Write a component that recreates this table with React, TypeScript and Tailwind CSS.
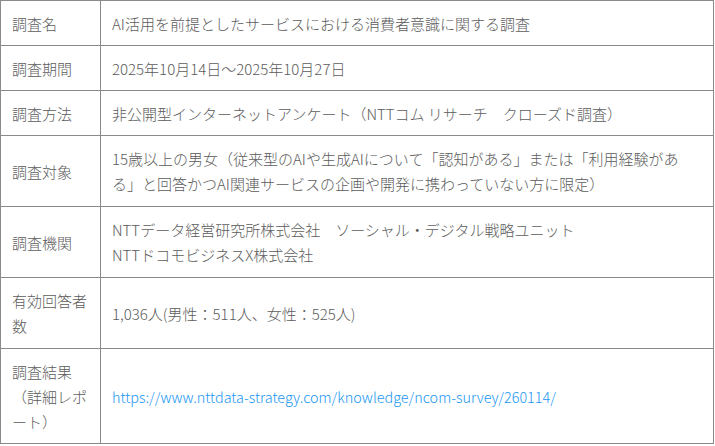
const rows: { label: React.ReactNode; value: React.ReactNode; tall?: boolean }[] = [
  { label: '調査名', value: 'AI活用を前提としたサービスにおける消費者意識に関する調査' },
  { label: '調査期間', value: '2025年10月14日～2025年10月27日' },
  { label: '調査方法', value: '非公開型インターネットアンケート（NTTコム リサーチ　クローズド調査）' },
  {
    label: '調査対象',
    tall: true,
    value: (
      <>
        <span className="block whitespace-nowrap">15歳以上の男女（従来型のAIや生成AIについて「認知がある」または「利用経験があ</span>
        <span className="block whitespace-nowrap">る」と回答かつAI関連サービスの企画や開発に携わっていない方に限定）</span>
      </>
    ),
  },
  {
    label: '調査機関',
    tall: true,
    value: (
      <>
        <span className="block">NTTデータ経営研究所株式会社　ソーシャル・デジタル戦略ユニット</span>
        <span className="block">NTTドコモビジネスX株式会社</span>
      </>
    ),
  },
  {
    label: (
      <>
        <span className="block">有効回答者</span>
        <span className="block">数</span>
      </>
    ),
    tall: true,
    value: '1,036人(男性：511人、女性：525人)',
  },
  {
    label: (
      <>
        <span className="block">調査結果</span>
        <span className="block">（詳細レポ</span>
        <span className="block">ート）</span>
      </>
    ),
    value: (
      <a href="#" className="text-[#2196f3] text-[14.4px]">
        https://www.nttdata-strategy.com/knowledge/ncom-survey/260114/
      </a>
    ),
  },
]

export default function App() {
  return (
    <div className="w-[715px] h-[446px] bg-white overflow-hidden font-['Noto_Sans_CJK_JP','Noto_Sans',sans-serif]">
      <table className="w-[714px] table-fixed border-separate border-spacing-0 border-r border-b border-[#8a8a8a] text-[15px] leading-[25px] text-[#5c5c5c] font-light">
        <tbody>
          {rows.map((r, i) => (
            <tr key={i}>
              <td
                className={`w-[100px] border-l border-t border-[#8a8a8a] px-[11px] align-middle whitespace-nowrap ${
                  r.tall ? 'py-[10px]' : 'py-[9.5px]'
                }`}
              >
                {r.label}
              </td>
              <td
                className={`border-l border-t border-[#8a8a8a] pl-[11px] pr-1 align-middle ${
                  r.tall ? 'py-[10px]' : 'py-[9.5px]'
                }`}
              >
                {r.value}
              </td>
            </tr>
          ))}
        </tbody>
      </table>
    </div>
  )
}
